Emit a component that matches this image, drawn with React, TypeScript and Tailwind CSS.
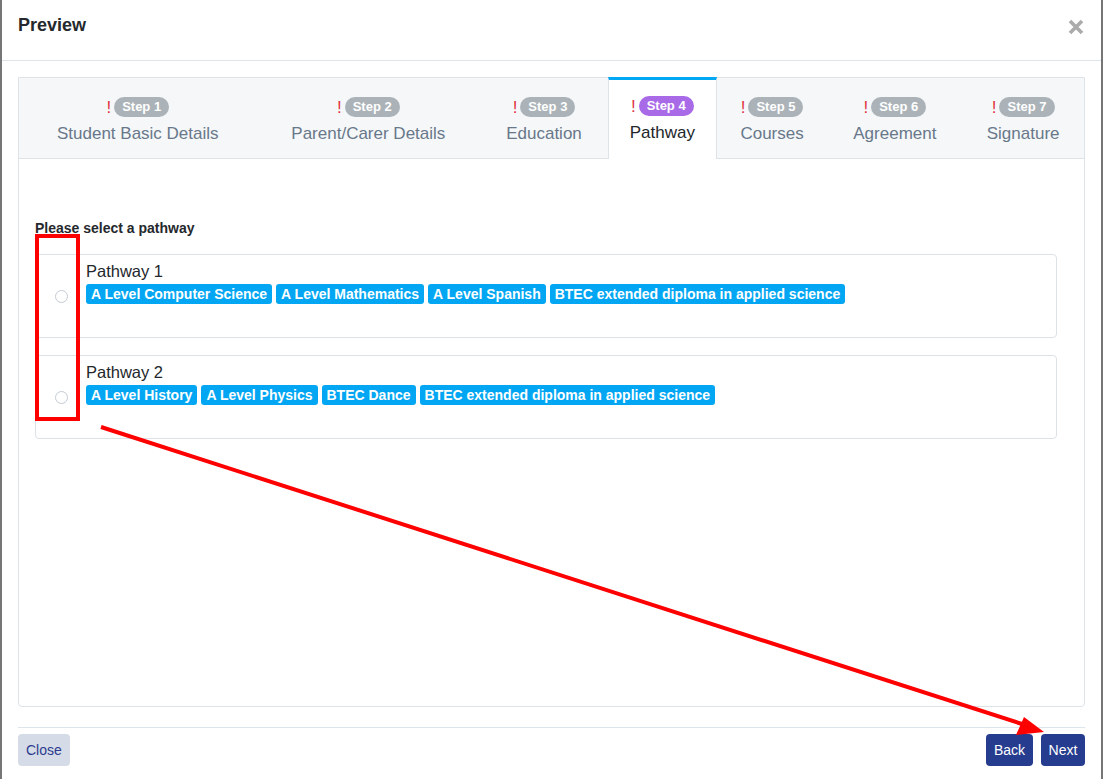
import React from "react";

type Step = { n: number; label: string; width: string };

const steps: Step[] = [
  { n: 1, label: "Student Basic Details", width: "w-[238px]" },
  { n: 2, label: "Parent/Carer Details", width: "w-[224px]" },
  { n: 3, label: "Education", width: "w-[128px]" },
  { n: 4, label: "Pathway", width: "w-[109px]" },
  { n: 5, label: "Courses", width: "w-[111px]" },
  { n: 6, label: "Agreement", width: "w-[135px]" },
  { n: 7, label: "Signature", width: "w-[122px]" },
];

const pathways = [
  {
    name: "Pathway 1",
    courses: [
      "A Level Computer Science",
      "A Level Mathematics",
      "A Level Spanish",
      "BTEC extended diploma in applied science",
    ],
  },
  {
    name: "Pathway 2",
    courses: [
      "A Level History",
      "A Level Physics",
      "BTEC Dance",
      "BTEC extended diploma in applied science",
    ],
  },
];

const ACTIVE = 4;

function StepTab({ step }: { step: Step }) {
  const active = step.n === ACTIVE;
  return (
    <div
      className={`${step.width} flex flex-col items-center ${
        active
          ? "bg-white border-t-[3px] border-t-[#00a8f3] border-x border-x-[#dee3e8] -mt-px pt-[16px] h-[82px] relative z-10"
          : "border-b border-[#dee3e8] h-[81px] pt-[19px]"
      }`}
    >
      <div className="flex items-center gap-[3px] h-[20px]">
        <span className="text-[#e0323f] text-[17px] leading-none">!</span>
        <span
          className={`h-[20px] px-[8px] rounded-full text-white text-[13px] font-bold leading-[20px] ${
            active ? "bg-[#a96ae8]" : "bg-[#abb3b9]"
          }`}
        >
          Step {step.n}
        </span>
      </div>
      <div
        className={`mt-[7px] text-[17px] leading-[20px] ${
          active ? "text-[#23272b]" : "text-[#68788a]"
        }`}
      >
        {step.label}
      </div>
    </div>
  );
}

function PathwayCard({ name, courses }: { name: string; courses: string[] }) {
  return (
    <div className="flex items-center h-[84px] border border-[#dce2e7] rounded-[4px]">
      <div className="w-[50px] flex justify-center pl-[1px]">
        <span className="block w-[13px] h-[13px] rounded-full border border-[#c3cbd4] bg-white" />
      </div>
      <div className="flex-1 self-start pt-[6px]">
        <div className="text-[16.5px] leading-[20px] text-[#23272b]">{name}</div>
        <div className="flex flex-wrap gap-[4px] mt-[3px]">
          {courses.map((c) => (
            <span
              key={c}
              className="h-[20px] px-[5px] rounded-[3px] bg-[#03a6f2] text-white text-[14px] font-bold leading-[20px]"
            >
              {c}
            </span>
          ))}
        </div>
      </div>
    </div>
  );
}

export default function App() {
  return (
    <div
      className="relative w-[1103px] h-[779px] bg-[#767676] flex overflow-hidden"
      style={{ fontFamily: '"Liberation Sans", Arial, sans-serif' }}
    >
      <div className="ml-[2px] w-[1099px] h-full bg-white flex flex-col">
        {/* Header */}
        <div className="h-[61px] flex items-center justify-between px-[16px] border-b border-[#dde5ec] shrink-0">
          <h1 className="text-[18px] font-bold text-[#25282c] -mt-[10px]">Preview</h1>
          <svg width="16" height="16" viewBox="0 0 16 16" className="mr-[1px] -mt-[6px]">
            <path d="M2 2 L14 14 M14 2 L2 14" stroke="#ababab" strokeWidth="3.6" />
          </svg>
        </div>

        {/* Body */}
        <div className="px-[16px] pt-[16px] shrink-0">
          <div className="w-[1067px] h-[630px] border border-[#dee3e8] rounded-b-[4px] flex flex-col">
            <div className="flex bg-[#f5f7f9] h-[81px]">
              {steps.map((s) => (
                <StepTab key={s.n} step={s} />
              ))}
            </div>
            <div className="px-[16px] pt-[61px]">
              <p className="text-[14px] font-bold text-[#25282c] leading-[16px]">
                Please select a pathway
              </p>
              <div className="mt-[18px] flex flex-col gap-[17px] w-[1022px]">
                {pathways.map((p) => (
                  <PathwayCard key={p.name} name={p.name} courses={p.courses} />
                ))}
              </div>
            </div>
          </div>
        </div>

        {/* Footer */}
        <div className="mx-[16px] mt-[20px] border-t border-[#dde5ec] pt-[6px] flex justify-between">
          <button className="h-[32px] px-[8px] rounded-[4px] bg-[#d5dbe7] text-[#2d3c8e] text-[14px]">
            Close
          </button>
          <div className="flex gap-[8px]">
            <button className="h-[32px] w-[47px] rounded-[4px] bg-[#263c8e] text-white text-[14px]">
              Back
            </button>
            <button className="h-[32px] w-[44px] rounded-[4px] bg-[#263c8e] text-white text-[14px]">
              Next
            </button>
          </div>
        </div>
      </div>

      {/* Red markup over the dialog */}
      <svg className="absolute inset-0 pointer-events-none" width="1103" height="779" viewBox="0 0 1103 779">
        <rect x="37" y="236" width="41" height="183" fill="none" stroke="#ff0000" strokeWidth="4" />
        <line x1="101" y1="427" x2="1022" y2="724" stroke="#ff0000" strokeWidth="4" />
        <polygon points="1044,732 1016,735 1024,717" fill="#ff0000" />
      </svg>
    </div>
  );
}
